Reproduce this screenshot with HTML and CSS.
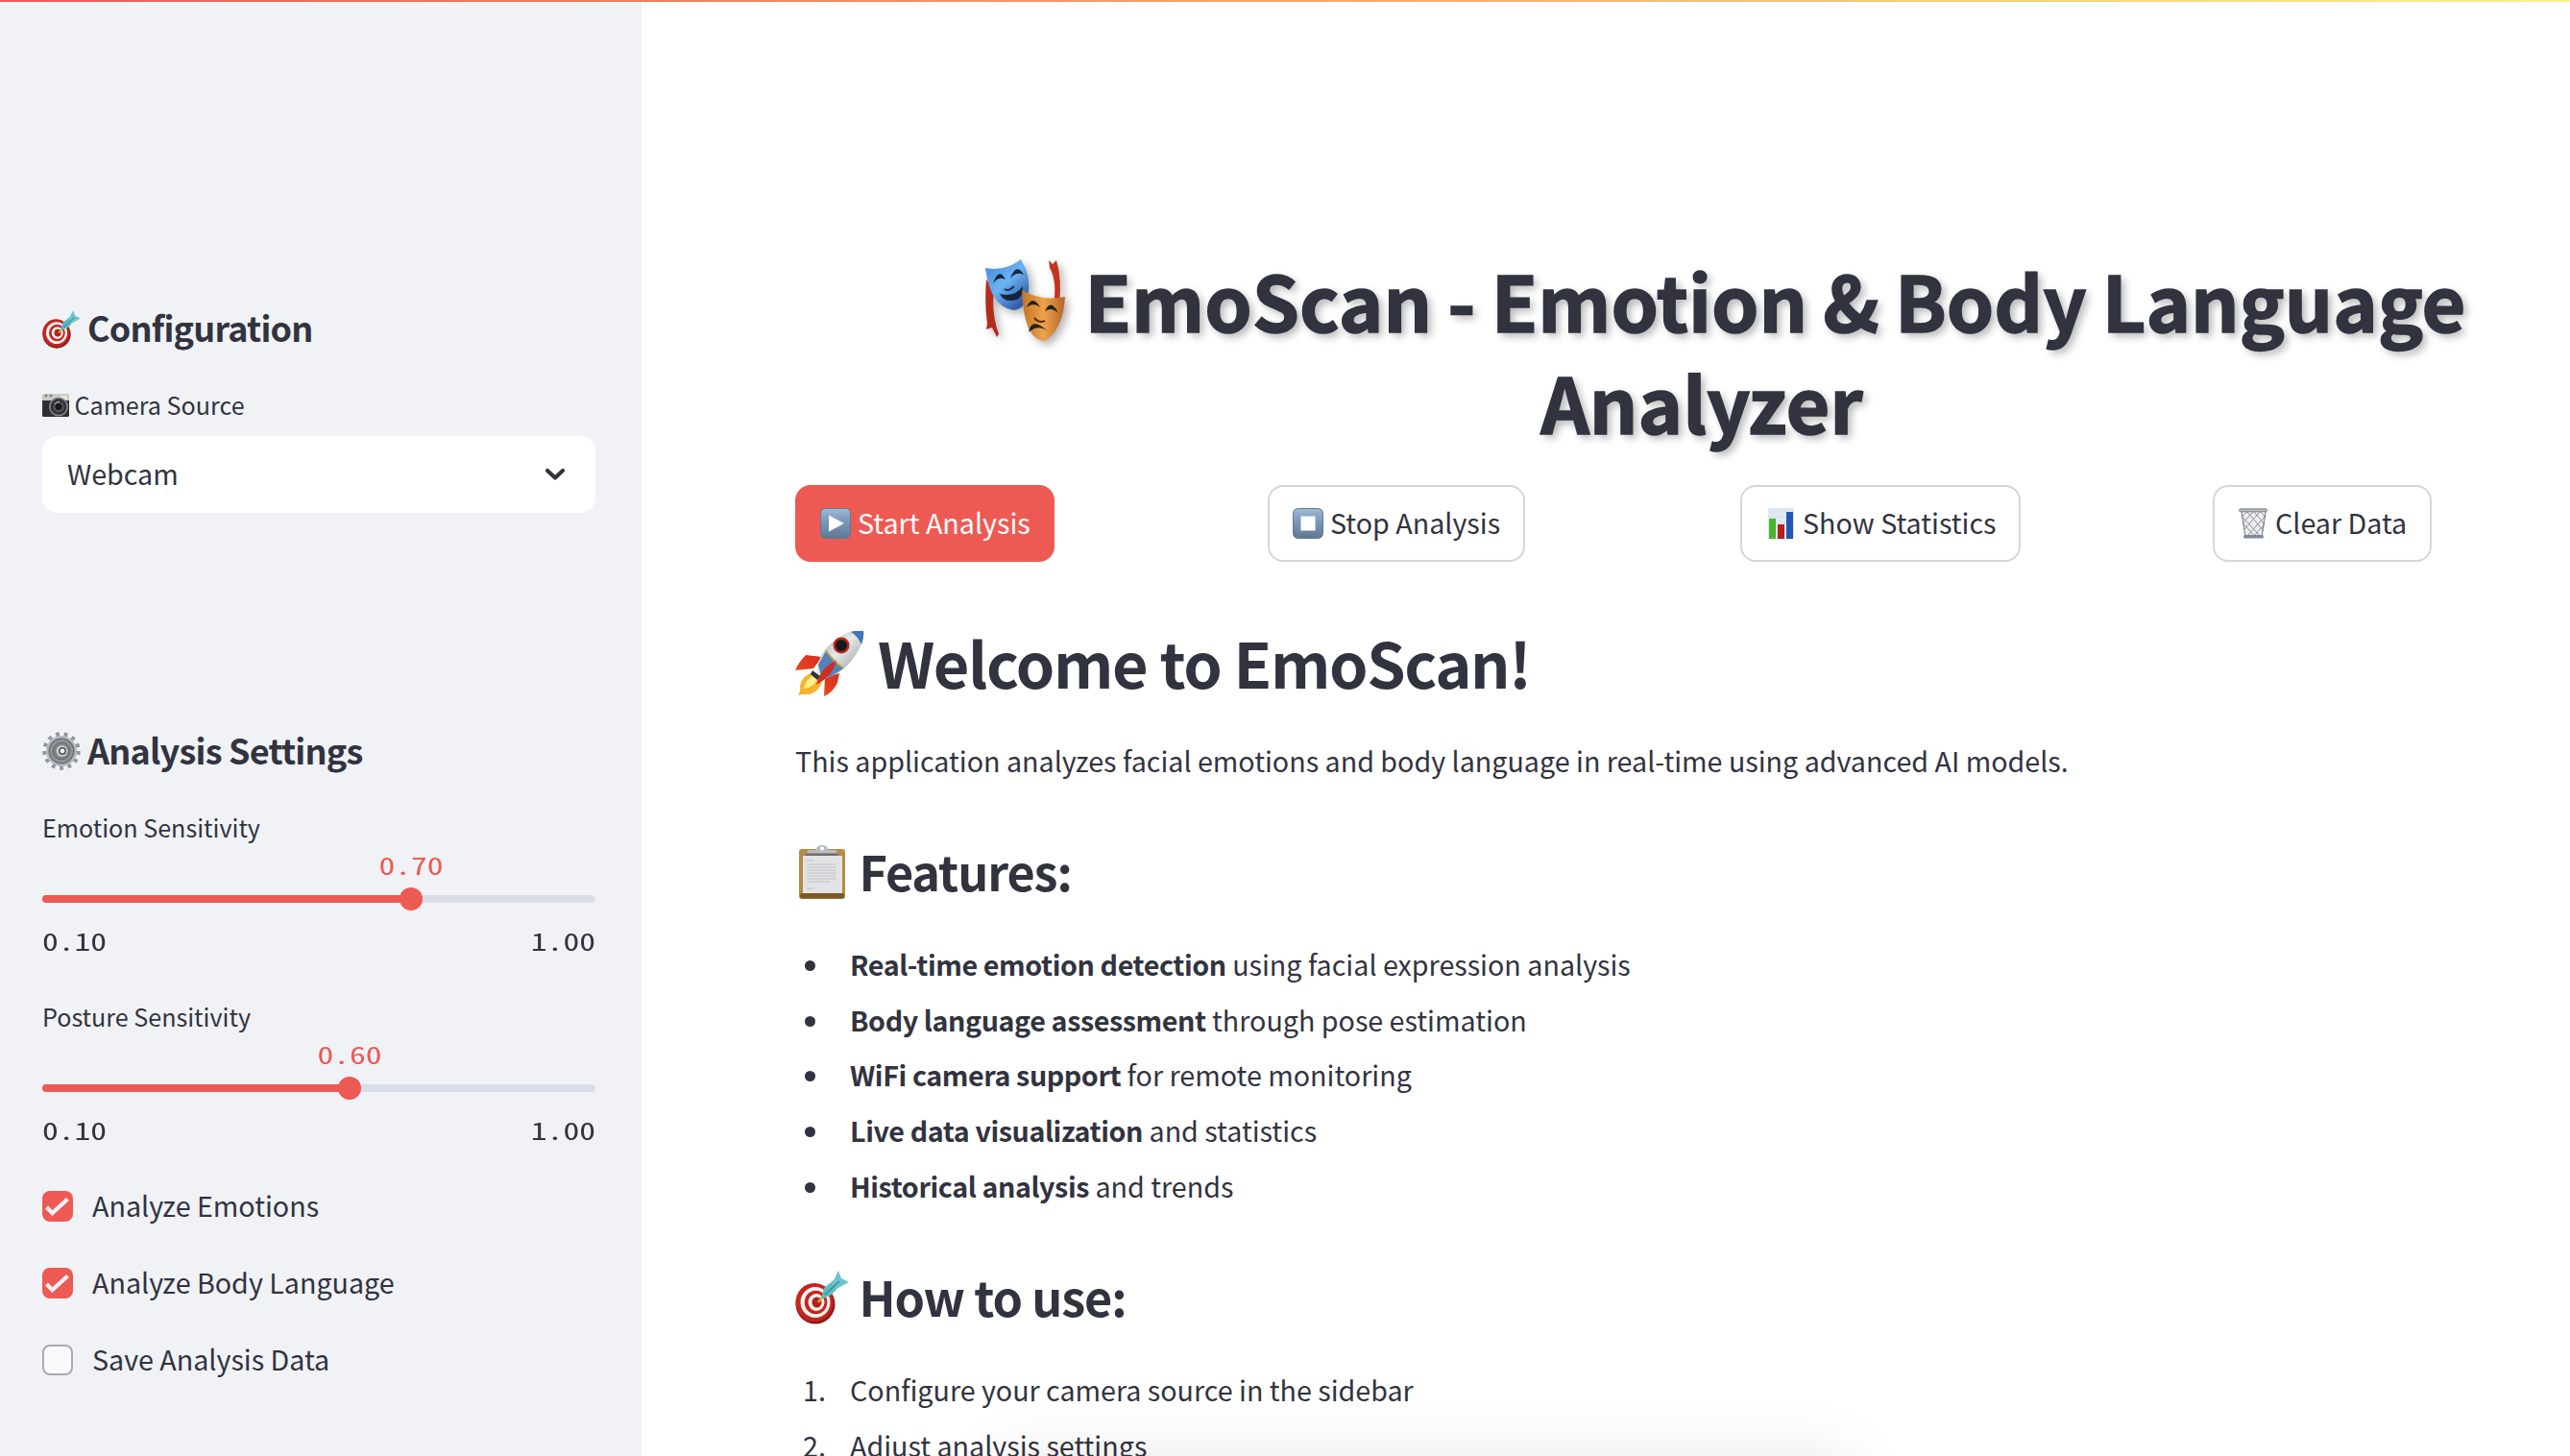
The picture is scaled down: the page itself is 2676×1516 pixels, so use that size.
FILE: index.html
```html
<!DOCTYPE html>
<html lang="en">
<head>
<meta charset="utf-8">
<title>EmoScan</title>
<link rel="stylesheet" href="styles.css">
</head>
<body>
<svg class="defs" width="0" height="0" aria-hidden="true">
  <defs>
    <linearGradient id="btnGrad" x1="0" y1="0" x2="0" y2="1"><stop offset="0" stop-color="#a3bbd0"/><stop offset=".35" stop-color="#7f9dbf"/><stop offset="1" stop-color="#5f7890"/></linearGradient>
    <linearGradient id="blueMask" x1="0" y1="0" x2=".8" y2="1"><stop offset="0" stop-color="#3f7fd0"/><stop offset=".5" stop-color="#6cb4f2"/><stop offset="1" stop-color="#2b4fa0"/></linearGradient>
    <linearGradient id="goldMask" x1="0" y1="0" x2="1" y2="0"><stop offset="0" stop-color="#c07428"/><stop offset=".5" stop-color="#efa24a"/><stop offset="1" stop-color="#b5652a"/></linearGradient>
    <linearGradient id="hull" x1="0" y1="0" x2="1" y2="1"><stop offset="0" stop-color="#9aa0a6"/><stop offset=".45" stop-color="#e6e8ea"/><stop offset="1" stop-color="#858a90"/></linearGradient>
    <linearGradient id="fin" x1="1" y1="0" x2="0" y2="1"><stop offset="0" stop-color="#c9261c"/><stop offset=".6" stop-color="#e5431f"/><stop offset="1" stop-color="#f9a63c"/></linearGradient>
    <symbol id="target" viewBox="0 0 56 56">
      <ellipse cx="21" cy="35" rx="20.500" ry="20.500" fill="#8e1b16"/>
      <ellipse cx="20" cy="33" rx="19.500" ry="20" fill="#c2261e"/>
      <ellipse cx="21" cy="33" rx="15.500" ry="16" fill="#f5f1ee"/>
      <ellipse cx="21.500" cy="33" rx="11.800" ry="12.200" fill="#c2261e"/>
      <ellipse cx="22" cy="33" rx="8.500" ry="9" fill="#f5f1ee"/>
      <ellipse cx="22.500" cy="33" rx="5" ry="5.500" fill="#b5221b"/>
      <path d="M24 33l8-11" stroke="#d8a72e" stroke-width="2.500"/>
      <path d="M27 30l3-12 10-8 6 6-8 9z" fill="#5bbcc6"/>
      <path d="M38 14L45 0l3 8 8 4-13 7z" fill="#6cc4cc"/>
      <path d="M31 25L46 11" stroke="#3c8e99" stroke-width="1.500"/>
    </symbol>
  </defs>
</svg>
<div class="topbar"></div>
<div class="app">
  <aside class="sidebar">
    <h3 class="side-title config"><svg class="ic40" viewBox="0 0 56 56"><use href="#target"/></svg><span>Configuration</span></h3>
    <div class="label camera"><svg class="cam" viewBox="0 0 28 26">
      <rect x="0" y="2" width="28" height="23" rx="1.500" fill="#2e2f31"/><path d="M0 3.500Q0 1 2 1h24q2 0 2 2.500V8H0z" fill="#c9c9c6"/><rect x="19" y="3" width="7" height="4" fill="#e9e6d6"/><circle cx="4" cy="3" r="1.300" fill="#777"/><circle cx="9" cy="3" r="1.300" fill="#777"/><circle cx="17" cy="14.500" r="10" fill="#8b8d8f"/><circle cx="17" cy="14.500" r="8.500" fill="#333538"/><circle cx="17" cy="14.500" r="5.500" fill="#55595e"/><circle cx="17" cy="14.500" r="3.500" fill="#17191c"/><path d="M13 12q2-3 5-3" stroke="#b9bcc0" fill="none"/></svg><span>Camera Source</span></div>
    <div class="select"><span>Webcam</span><svg class="chev" viewBox="0 0 22 14"><path d="M3 3l8 7.500L19 3" fill="none" stroke="#31333f" stroke-width="4.200" stroke-linecap="round" stroke-linejoin="round"/></svg></div>
    <h3 class="side-title settings"><svg class="ic40 gear" viewBox="0 0 40 40">
      <circle cx="20" cy="20" r="17.500" fill="none" stroke="#8f979f" stroke-width="4.500" stroke-dasharray="3.800 4.658"/><circle cx="20" cy="20" r="16" fill="#b4bac0"/><circle cx="20" cy="20" r="13.500" fill="#6b6f74"/><circle cx="20" cy="20" r="12" fill="#909498"/><circle cx="20" cy="20" r="9" fill="#7d8186" stroke="#65686c"/><circle cx="20.500" cy="20" r="6" fill="#c9cdd0"/><circle cx="21" cy="20" r="3.200" fill="#f0f2f6" stroke="#5a5350" stroke-width="1.500"/></svg><span>Analysis Settings</span></h3>
    <div class="slider">
      <div class="label"><span>Emotion Sensitivity</span></div>
      <div class="value"><span style="left:66.667%">0.70</span></div>
      <div class="track"><div class="fill" style="width:66.667%"></div></div>
      <div class="ticks"><span>0.10</span><span>1.00</span></div>
    </div>
    <div class="slider">
      <div class="label"><span>Posture Sensitivity</span></div>
      <div class="value"><span style="left:55.556%">0.60</span></div>
      <div class="track"><div class="fill" style="width:55.556%"></div></div>
      <div class="ticks"><span>0.10</span><span>1.00</span></div>
    </div>
    <div class="checks">
      <div class="check"><i class="box on"><svg viewBox="0 0 32 32"><path d="M4.500 17l6 6L26.500 8.500" fill="none" stroke="#f0f2f6" stroke-width="4.300"/></svg></i><span>Analyze Emotions</span></div>
      <div class="check"><i class="box on"><svg viewBox="0 0 32 32"><path d="M4.500 17l6 6L26.500 8.500" fill="none" stroke="#f0f2f6" stroke-width="4.300"/></svg></i><span>Analyze Body Language</span></div>
      <div class="check"><i class="box"></i><span>Save Analysis Data</span></div>
    </div>
  </aside>
  <main class="main">
    <h1 class="title"><span class="t1"><svg class="masks" viewBox="0 0 84 86">
      <path d="M2 22Q0 48 3 68l-1 6 6-2 5 10 2-3q-8-22-5-46z" fill="#b52a1c"/>
      <path d="M67 2l4 4 4-4q6 20 3 46h-6q4-24-4-38z" fill="#c3341f"/>
      <path d="M1 10Q22 14 38 1q10 16 8 34-3 18-16 19Q6 50 1 10z" fill="url(#blueMask)"/>
      <path d="M9 26q6-17 13-4-7-4-13 4zM27 21q6-17 14-4-8-4-14 4zM16 37q15 4 24-8 1 14-11 15-9 1-13-7z" fill="#14263f"/><path d="M21 32q4 3 10-3" stroke="#17365c" stroke-width="2" fill="none"/>
      <path d="M39 33q20 12 45 7-2 34-21 46Q41 86 39 33z" fill="url(#goldMask)"/>
      <path d="M44 51q6-14 14 0-7-6-14 0zM63 55q6-14 14 2-7-7-14-2zM46 77q3-17 20-1-10-8-20 1z" fill="#22201d"/><path d="M52 62q5 6 11 3" stroke="#5c2c0d" stroke-width="2" fill="none"/></svg><span>EmoScan - Emotion &amp; Body Language</span></span><span class="t2">Analyzer</span></h1>
    <div class="buttons">
      <div><button class="btn primary"><svg class="ic32" viewBox="0 0 32 32"><rect x=".5" y=".5" width="31" height="31" rx="5" fill="url(#btnGrad)" stroke="#5e7c98"/><path d="M9 7.500v17L25 16z" fill="#fff"/></svg><span>Start Analysis</span></button></div>
      <div><button class="btn"><svg class="ic32" viewBox="0 0 32 32"><rect x=".5" y=".5" width="31" height="31" rx="5" fill="url(#btnGrad)" stroke="#5e7c98"/><rect x="8.500" y="8.500" width="15" height="15" fill="#fff"/></svg><span>Stop Analysis</span></button></div>
      <div><button class="btn"><svg class="ic32" viewBox="0 0 32 32"><rect x="3" y="0" width="27" height="32" fill="#dce6ef"/><path d="M3 6h27M3 12h27M3 18h27M3 24h27" stroke="#eef3f7"/><rect x="4" y="11" width="7" height="21" fill="#4cb52f"/><rect x="13" y="17" width="7" height="15" fill="#b0211a"/><rect x="22" y="4" width="7" height="28" fill="#2456b8"/></svg><span>Show Statistics</span></button></div>
      <div><button class="btn"><svg class="ic32" viewBox="0 0 32 32"><path d="M3 3l4 28h19l4-28z" fill="#eceef0"/><path d="M4 8l20 22M5 15l14 16M10 4l17 20M17 4l11 13M24 4l5 6M29 8L9 30M28 17L15 31M23 4L7 22M16 4L5 16M10 4L4 9" stroke="#8d9196" fill="none"/><path d="M4 4l4 26M29 4l-4 26" stroke="#777b82"/><rect x="1.500" y=".8" width="29" height="3" rx="1.500" fill="#b7bbc0" stroke="#6e7176" stroke-width=".8"/><rect x="6" y="28" width="21" height="3.500" rx="1.500" fill="#7c8aa0"/></svg><span>Clear Data</span></button></div>
    </div>
    <h2 class="welcome"><svg class="rocket" viewBox="0 0 72 70">
      <path d="M28 27L11 25Q4 32 0 41l19-2zM46 44l-2 10q-5 10-14 14l1-20z" fill="url(#fin)"/>
      <path d="M19 43Q7 46 5 57q1 5-2 10 7-2 12-1 11-4 13-14z" fill="#f6b32c"/><path d="M20 46q-9 3-11 14 10-1 14-10z" fill="#fff08a"/>
      <path d="M22 44Q24 16 54 2q10-4 17-2 1 8-4 18Q52 46 27 50z" fill="url(#hull)"/>
      <path d="M58 1q8-3 13-1 1 6-2 14-4-9-11-13z" fill="#3f74b5"/>
      <path d="M24 35l8-14 18 18-14 9-9-1z" fill="#5580b8"/><path d="M32 20q7 11 19 19" stroke="#d0a93c" stroke-width="1.500" fill="none"/>
      <circle cx="48" cy="15" r="8.500" fill="#b9231c"/><circle cx="48" cy="15" r="6" fill="#17181a"/>
      <path d="M43 31Q27 37 22 56q16-8 21-25z" fill="#cf2d22"/><path d="M18 41l8 6-3 4-7-6z" fill="#30343a"/></svg><span>Welcome to EmoScan!</span></h2>
    <p class="intro">This application analyzes facial emotions and body language in real-time using advanced AI models.</p>
    <h3 class="sub features"><svg class="ic56" viewBox="0 0 56 56"><rect x="4" y="4" width="48" height="52" rx="3" fill="#b58b45"/><rect x="5" y="50" width="46" height="5.500" rx="2" fill="#7d5a26"/><path d="M8 11h41v39H8z" fill="#e2e3e4"/><path d="M12 20h30M12 23h31M12 26h30M12 29h31M12 32h30M12 35h30M12 38h24M12 45h8M12 16h7" stroke="#cbcdd0" stroke-width="1.300"/><path d="M11 9l3-4h8q0-5 6-5t6 5h8l3 4z" fill="#b4bcc4"/><path d="M11 8.500h34v2.500H11z" fill="#736c64"/><circle cx="28" cy="3.500" r="2" fill="#fff"/></svg><span>Features:</span></h3>
    <ul class="list">
      <li><i class="dot"></i><span><b>Real-time emotion detection</b> using facial expression analysis</span></li>
      <li><i class="dot"></i><span><b>Body language assessment</b> through pose estimation</span></li>
      <li><i class="dot"></i><span><b>WiFi camera support</b> for remote monitoring</span></li>
      <li><i class="dot"></i><span><b>Live data visualization</b> and statistics</span></li>
      <li><i class="dot"></i><span><b>Historical analysis</b> and trends</span></li>
    </ul>
    <h3 class="sub howto"><svg class="ic56" viewBox="0 0 56 56"><use href="#target"/></svg><span>How to use:</span></h3>
    <ol class="list">
      <li><i class="num">1.</i><span>Configure your camera source in the sidebar</span></li>
      <li><i class="num">2.</i><span>Adjust analysis settings</span></li>
    </ol>
  </main>
</div>
<div class="shade"></div>
</body>
</html>
```
FILE: styles.css
```css
* { box-sizing: border-box; }
html, body { margin: 0; height: 1516px; overflow: hidden; }
body { background: #fff; color: #31333f; font: 400 28.660px/1.6 "Noto Sans CJK SC", sans-serif; position: relative; }
h1, h2, h3, p, ul, ol { margin: 0; padding: 0; }
svg { display: block; flex: none; }
.defs { position: absolute; }
i { font-style: normal; }
span { white-space: nowrap; }
.topbar { position: absolute; top: 0; left: 0; right: 0; height: 2px; z-index: 2; background: linear-gradient(90deg, #ec5a53, #fcf08a); }
.app { display: flex; height: 1516px; }
.sidebar { width: 668px; flex: none; background: #f0f2f6; padding: 319px 48px 0 44px; height: 1516px; overflow: hidden; }
.main { width: 2008px; flex: none; padding: 259px 0 0 160px; height: 1516px; overflow: hidden; }

.side-title { display: flex; align-items: center; height: 48px; font-size: 36px; line-height: 48px; font-weight: 600; letter-spacing: -.022em; gap: 7px; }
.side-title span { margin-bottom: 6px; }
.ic40 { width: 40px; height: 42px; }
.gear { height: 40px; margin-bottom: 3px; }
.label { display: flex; align-items: center; height: 40px; line-height: 40px; font-size: 25.100px; }
.label span { margin-bottom: 4px; }
.camera { gap: 5.500px; margin-top: 35px; }
.camera span { margin-bottom: 2px; }
.cam { width: 28px; height: 26px; }
.select { margin-top: 12px; height: 80px; border-radius: 16px; background: #fff; display: flex; align-items: center; justify-content: space-between; padding: 0 31px 0 26px; }
.select span, .btn span, .check span, .list span { margin-bottom: 3px; }
.chev { width: 22px; height: 14px; }
.settings { margin-top: 225px; margin-bottom: 36px; }
.slider { height: 196.500px; }
.value, .ticks { font: 33.600px/34px "Noto Sans Mono CJK SC", monospace; }
.value { height: 34px; color: #ed5a53; position: relative; margin-top: 0; transform: scaleY(.76); }
.value span { position: absolute; transform: translateX(-50%); }
.track { height: 8px; margin-top: 15px; border-radius: 4px; background: #dadee9; }
.fill { height: 8px; border-radius: 4px 0 0 4px; background: #ed5a53; position: relative; }
.fill::after { content: ""; position: absolute; right: -12px; top: -8px; width: 24px; height: 24px; border-radius: 50%; background: #ed5a53; }
.ticks { display: flex; justify-content: space-between; margin-top: 22px; transform: scaleY(.76); }
.checks { display: flex; flex-direction: column; gap: 32px; margin-top: -4px; }
.check { display: flex; align-items: center; height: 48px; gap: 20px; }
.box { width: 32px; height: 32px; border-radius: 8px; border: 2px solid #a9abb1; background: #f9fafc; }
.box.on { border: 0; background: #ed5a53; }

.title { width: 1936px; font-size: 79px; line-height: 105.600px; font-weight: 700; word-spacing: -1.700px; -webkit-text-stroke: 1.500px #31333f; text-shadow: 4px 4px 8px rgba(0,0,0,.3); }
.title > span { display: flex; justify-content: center; }
.t1 { align-items: center; gap: 21px; }
.t2 { padding-right: 48px; }
.masks { width: 84px; height: 86px; filter: drop-shadow(4px 4px 4px rgba(0,0,0,.3)); }
.buttons { width: 1936px; display: grid; grid-template-columns: repeat(4, 460px); gap: 32px; margin-top: 35px; }
.btn { display: flex; align-items: center; height: 80px; padding: 0 23.500px 0 24px; gap: 7px; border: 2px solid #d6d6d9; border-radius: 16px; background: #fff; color: #31333f; font: inherit; }
.btn.primary { background: #ed5a53; border-color: #ed5a53; color: #fff; }
.ic32 { width: 32px; height: 32px; }
.welcome { display: flex; align-items: center; height: 86px; margin-top: 64px; gap: 14px; font-size: 64.800px; line-height: 86px; font-weight: 600; letter-spacing: -.022em; }
.welcome span { margin-bottom: 7px; }
.rocket { width: 72px; height: 70px; }
.intro { margin-top: 33.500px; height: 46px; line-height: 46px; white-space: nowrap; }
.sub { display: flex; align-items: center; height: 68px; gap: 10.500px; font-size: 50.400px; line-height: 68px; font-weight: 600; letter-spacing: -.022em; }
.sub span { margin-bottom: 3px; }
.ic56 { width: 56px; height: 56px; }
.features { margin-top: 59.500px; }
.list { list-style: none; margin-top: 34.500px; }
.list li { display: flex; align-items: center; height: 57.700px; }
.list b { font-weight: 600; letter-spacing: -.014em; }
.dot { width: 11px; height: 11px; border-radius: 50%; background: #31333f; margin: 0 36px 0 10px; }
.num { width: 50px; padding-left: 8px; margin: 0 7px 3px 0; }
.howto { margin-top: 52px; }
.shade { position: absolute; left: 1040px; top: 1526px; width: 880px; height: 200px; box-shadow: 0 0 75px rgba(0,0,0,.13); }
```
